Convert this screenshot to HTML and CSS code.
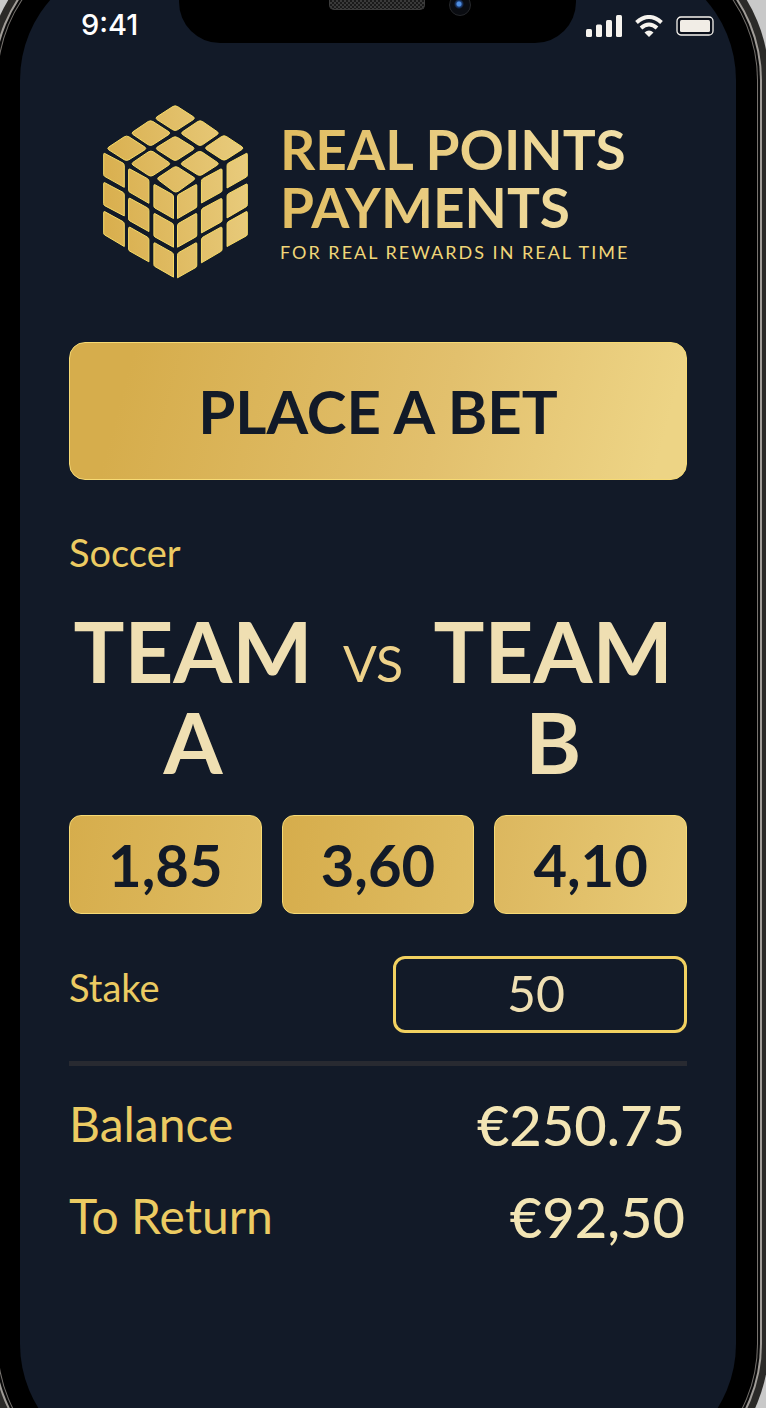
FILE: index.html
```html
<!DOCTYPE html>
<html lang="en">
<head>
    <meta charset="UTF-8">
    <meta name="viewport" content="width=device-width, initial-scale=1.0">
    <title>Real Points Payments</title>
    <link rel="stylesheet" href="styles.css">
</head>
<body>
    <div class="phone">
        <main class="screen">
            <div class="status-bar">
                <div class="time">9:41</div>
                <div class="notch">
                    <div class="speaker"></div>
                    <div class="camera"></div>
                </div>
                <div class="status-icons">
                    <svg width="36" height="22" viewBox="0 0 36 22" fill="#f6f3ee">
                        <rect x="0" y="14" width="6" height="8" rx="1.5"/>
                        <rect x="10" y="9.500" width="6" height="12.500" rx="1.5"/>
                        <rect x="20" y="5" width="6" height="17" rx="1.5"/>
                        <rect x="30" y="0" width="6" height="22" rx="1.5"/>
                    </svg>
                    <svg width="28" height="22" viewBox="0 0 28 22" fill="none" stroke="#f6f3ee" stroke-width="4">
                        <path d="M1.500 7.500Q14-3.500 26.500 7.500"/>
                        <path d="M6 13Q14 6 22 13"/>
                        <path d="M9.500 17.500Q14 13.500 18.500 17.500L14 22Z" fill="#f6f3ee" stroke="none"/>
                    </svg>
                    <svg width="38" height="20" viewBox="0 0 38 20">
                        <rect x="1" y="1" width="36" height="18" rx="4" fill="#0a0f1a" stroke="#f6f3ee" stroke-width="1.300"/>
                        <rect x="4" y="4" width="30" height="12" rx="1.500" fill="#f1ede6"/>
                    </svg>
                </div>
            </div>

            <header class="brand">
                <svg class="cube" viewBox="38 28 436 522">
                    <defs>
                        <linearGradient id="gold" gradientUnits="userSpaceOnUse" x1="38" y1="300" x2="474" y2="240">
                            <stop offset="0" stop-color="#d9af4e"/>
                            <stop offset="1" stop-color="#e8cb7c"/>
                        </linearGradient>
                    </defs>
                    <g fill="url(#gold)" stroke="#f7dc66" stroke-width="3" stroke-linejoin="round">
                        <!-- top face -->
                        <path d="M262 32L310 63Q315 67 310 71L262 102Q255 106 248 102L200 71Q195 67 200 63L248 32Q255 28 262 32Z"/>
                        <path d="M188 77L236 108Q241 112 236 116L188 147Q181 151 174 147L128 116Q123 112 128 108L174 77Q181 73 188 77Z"/>
                        <path d="M337 77L382 108Q387 112 382 116L337 147Q330 151 323 147L277 116Q272 112 277 108L323 77Q330 73 337 77Z"/>
                        <path d="M116 123L164 154Q169 158 164 162L116 192Q109 196 102 192L55 162Q50 158 55 154L102 123Q109 119 116 123Z"/>
                        <path d="M262 125L309 154Q314 158 309 162L262 192Q255 196 248 192L201 162Q196 158 201 154L248 125Q255 121 262 125Z"/>
                        <path d="M409 122L456 153Q461 157 456 161L409 191Q402 195 395 191L349 161Q344 157 349 153L395 122Q402 118 409 122Z"/>
                        <path d="M189 168L236 200Q241 204 236 208L189 239Q182 243 175 239L128 208Q123 204 128 200L175 168Q182 164 189 168Z"/>
                        <path d="M336 169L382 200Q387 204 382 208L336 237Q329 241 322 237L276 208Q271 204 276 200L322 169Q329 165 336 169Z"/>
                        <path d="M264 215L311 245Q316 249 311 253L264 287Q257 291 250 287L205 253Q200 249 205 245L250 215Q257 211 264 215Z"/>
                        <!-- left face -->
                        <path d="M43 173L98 202Q102 205 102 210V275L43 242Q40 240 40 236V176Q40 172 43 173Z"/>
                        <path d="M43 261L98 290Q102 293 102 298V361L43 330Q40 328 40 324V264Q40 260 43 261Z"/>
                        <path d="M43 348L98 378Q102 381 102 386V453L43 418Q40 416 40 412V351Q40 347 43 348Z"/>
                        <path d="M119 220L172 249Q176 252 176 257V323L119 290Q115 288 115 284V223Q115 219 119 220Z"/>
                        <path d="M119 308L172 337Q176 340 176 345V408L119 376Q115 374 115 370V311Q115 307 119 308Z"/>
                        <path d="M119 395L172 425Q176 428 176 433V499L119 467Q115 465 115 461V398Q115 394 119 395Z"/>
                        <path d="M194 267L246 296Q250 299 250 304V369L194 337Q191 335 191 331V270Q191 266 194 267Z"/>
                        <path d="M194 354L246 383Q250 386 250 391V455L194 424Q191 422 191 418V357Q191 353 194 354Z"/>
                        <path d="M194 442L246 471Q250 474 250 479V545L194 513Q191 511 191 507V445Q191 441 194 442Z"/>
                        <!-- right face -->
                        <path d="M317 267L266 296Q262 299 262 304V369L317 337Q320 335 320 331V270Q320 266 317 267Z"/>
                        <path d="M317 354L266 383Q262 386 262 391V455L317 424Q320 422 320 418V357Q320 353 317 354Z"/>
                        <path d="M317 442L266 471Q262 474 262 479V547L317 516Q320 514 320 509V445Q320 441 317 442Z"/>
                        <path d="M392 220L338 249Q334 252 334 257V322L392 290Q396 288 396 284V223Q396 219 392 220Z"/>
                        <path d="M392 309L338 338Q334 341 334 346V412L392 380Q396 378 396 374V312Q396 308 392 309Z"/>
                        <path d="M392 395L338 425Q334 428 334 433V502L392 468Q396 466 396 462V398Q396 394 392 395Z"/>
                        <path d="M469 173L415 202Q411 205 411 210V277L469 244Q472 242 472 238V176Q472 172 469 173Z"/>
                        <path d="M469 265L415 294Q411 297 411 302V367L469 333Q472 331 472 327V268Q472 264 469 265Z"/>
                        <path d="M469 348L415 378Q411 381 411 386V453L469 421Q472 419 472 415V351Q472 347 469 348Z"/>
                    </g>
                </svg>
                <div>
                    <h1 class="brand-name">REAL POINTS<br>PAYMENTS</h1>
                    <p class="tagline">FOR REAL REWARDS IN REAL TIME</p>
                </div>
            </header>

            <button class="place-bet" type="button">PLACE A BET</button>

            <p class="label sport">Soccer</p>

            <div class="match">
                <h2 class="team">TEAM A</h2>
                <span class="vs">VS</span>
                <h2 class="team">TEAM B</h2>
            </div>

            <div class="odds">
                <button type="button">1,85</button>
                <button type="button">3,60</button>
                <button type="button">4,10</button>
            </div>

            <div class="stake">
                <label class="label" for="stake">Stake</label>
                <input type="text" id="stake" inputmode="decimal" value="50">
            </div>

            <dl class="totals">
                <div class="total">
                    <dt>Balance</dt>
                    <dd>€250.75</dd>
                </div>
                <div class="total">
                    <dt>To Return</dt>
                    <dd>€92,50</dd>
                </div>
            </dl>
        </main>
    </div>
</body>
</html>
```
FILE: styles.css
```css
* {
    box-sizing: border-box;
}
html {
    overflow: hidden;
}
body {
    margin: 0;
    height: 100vh;
    overflow: hidden;
    background: #c9c9c9;
    color: #efdfb2;
    font-family: Lato, "Open Sans", sans-serif;
}
h1, h2, p, dl, dd {
    margin: 0;
}

/* handset, a little larger than the window */
.phone {
    margin: -63px 9px 0 -2px;
    padding: 22px 21px 22px 22px;
    background: #000;
    border-radius: 143px;
    box-shadow: 0 0 0 1px #77736f, 0 0 0 3px #0a0a0a, 0 0 0 5px #a19d98, 0 0 0 12px #2b2a28;
}
.screen {
    min-height: calc(100vh + 98px);
    padding: 41px 49px 57px;
    background: #121a28;
    border-radius: 121px;
}

/* status bar */
.status-bar {
    display: grid;
    grid-template-columns: 159px 1fr 160px;
    margin: 0 -49px;
    height: 41px;
    color: #fff;
}
.time {
    padding: 7px 0 0 61px;
    font-family: Inter, sans-serif;
    font-size: 29px;
    line-height: 36px;
    font-weight: 500;
}
.notch {
    display: flex;
    justify-content: center;
    gap: 24px;
    padding-left: 44px;
    background: #000;
    border-radius: 0 0 41px 41px;
}
.speaker {
    width: 96px;
    height: 10px;
    border: 1px solid #3c3c3c;
    border-top: 0;
    border-radius: 0 0 5px 5px;
    background: repeating-conic-gradient(#3a3a3a 0 25%, #1a1a1a 0 50%) 0 0 / 4px 4px;
}
.camera {
    width: 22px;
    height: 22px;
    margin-top: -6px;
    border: 1px solid #25272b;
    border-radius: 50%;
    background: radial-gradient(circle at 45% 45%, #4f8ee0 2px, #1d3f78 3px, #0a0c11 5px);
}
.status-icons {
    display: flex;
    align-items: center;
    justify-content: flex-end;
    gap: 13px;
    padding: 8px 22px 0 0;
}

/* logo */
.brand {
    display: flex;
    align-items: center;
    gap: 32px;
    margin: 64px 0 63px;
    padding-left: 34px;
}
.cube {
    flex: none;
    width: 145px;
    height: 174px;
}
.brand-name {
    font-size: 55px;
    line-height: 58px;
    font-weight: 700;
    white-space: nowrap;
    background: linear-gradient(100deg, #e0bb5e, #f3e2ac);
    -webkit-background-clip: text;
    background-clip: text;
    color: transparent;
}
.tagline {
    margin-top: 4px;
    font-size: 18px;
    line-height: 24px;
    letter-spacing: 2px;
    white-space: nowrap;
    color: #f0d678;
}

/* gold buttons */
button {
    border: 1px solid #f6da75;
    color: #121a28;
    font-family: inherit;
    font-weight: 700;
    font-size: 58px;
    cursor: pointer;
}
.place-bet {
    display: block;
    width: 100%;
    height: 138px;
    border-radius: 16px;
    font-size: 60px;
    background: linear-gradient(105deg, #d6ad4c 10%, #e2c06d 60%, #edd485 95%);
}
.label {
    font-size: 38px;
    line-height: 44px;
    color: #eccb62;
}
.sport {
    margin-top: 50px;
}

/* fixture */
.match {
    display: flex;
    gap: 30px;
    margin-top: 31px;
    padding-left: 4px;
}
.team {
    width: 240px;
    text-align: center;
    font-size: 85px;
    line-height: 91px;
    font-weight: 700;
    color: #efdfb2;
}
.vs {
    padding-top: 24px;
    font-size: 50px;
    line-height: 68px;
    color: #eed28a;
}
.odds {
    display: grid;
    grid-template-columns: repeat(3, 1fr);
    gap: 20px;
    margin-top: 28px;
}
.odds button {
    height: 99px;
    border-radius: 12px;
    background: linear-gradient(100deg, #d6ad4c, #dfbc62);
}
.odds button:last-child {
    background: linear-gradient(100deg, #dcb75e, #e8cb78);
}

/* stake */
.stake {
    display: flex;
    justify-content: space-between;
    align-items: center;
    margin-top: 42px;
    padding-bottom: 28px;
    border-bottom: 5px solid #282a31;
}
.stake .label {
    padding-bottom: 16px;
}
.stake input {
    width: 294px;
    height: 77px;
    padding: 0 8px 4px 0;
    border: 3px solid #f2d160;
    border-radius: 12px;
    background: transparent;
    color: #efdfb2;
    font-family: inherit;
    font-size: 50px;
    text-align: center;
}

/* totals */
.totals {
    padding-top: 14px;
}
.total {
    display: flex;
    justify-content: space-between;
    align-items: center;
    height: 92px;
    padding-right: 2px;
}
.total dt {
    font-size: 48px;
    line-height: 60px;
    padding-bottom: 4px;
    color: #eccb62;
}
.total dd {
    font-size: 56px;
    line-height: 60px;
    padding-bottom: 2px;
    font-weight: 500;
    color: #f3e5b4;
}
```
